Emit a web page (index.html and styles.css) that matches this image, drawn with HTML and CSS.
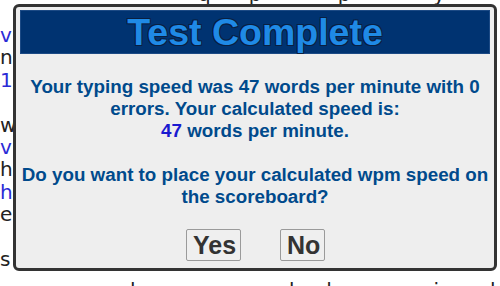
FILE: index.html
```html
<!DOCTYPE html>
<html>
<head>
<meta charset="utf-8">
<link rel="stylesheet" href="styles.css">
</head>
<body>
<div class="page">
  <div class="topline">q&nbsp;&nbsp;&nbsp;&nbsp;&nbsp;&nbsp;p&nbsp;&nbsp;&nbsp;&nbsp;&nbsp;&nbsp;&nbsp;&nbsp;&nbsp;&nbsp;&nbsp;&nbsp;p&nbsp;&nbsp;&nbsp;&nbsp;&nbsp;&nbsp;&nbsp;&nbsp;&nbsp;&nbsp;&nbsp;&nbsp;&nbsp;y&nbsp;&nbsp;&nbsp;&nbsp;&nbsp;&nbsp;&nbsp;&nbsp;&nbsp;&nbsp;p</div>
  <div class="lines">
    <div class="ln blue">v</div>
    <div class="ln">n</div>
    <div class="ln blue">1</div>
    <div class="ln"></div>
    <div class="ln">w</div>
    <div class="ln blue">v</div>
    <div class="ln">h</div>
    <div class="ln blue">h</div>
    <div class="ln">e</div>
    <div class="ln"></div>
    <div class="ln">s</div>
  </div>
  <div class="botline">l&nbsp;&nbsp;&nbsp;&nbsp;&nbsp;&nbsp;&nbsp;&nbsp;&nbsp;&nbsp;&nbsp;&nbsp;&nbsp;&nbsp;&nbsp;&nbsp;&nbsp;&nbsp;&nbsp;&nbsp;&nbsp;&nbsp;&nbsp;d&nbsp;&nbsp;&nbsp;&nbsp;&nbsp;l&nbsp;&nbsp;&nbsp;&nbsp;&nbsp;&nbsp;&nbsp;&nbsp;&nbsp;&nbsp;&nbsp;&nbsp;&nbsp;&nbsp;&nbsp;&nbsp;i&nbsp;&nbsp;&nbsp;&nbsp;&nbsp;&nbsp;&nbsp;&nbsp;l&nbsp;&nbsp;&nbsp;&nbsp;&nbsp;&nbsp;&nbsp;&nbsp;b</div>
</div>

<div class="dialog">
  <div class="header">Test Complete</div>
  <div class="content">
    <p class="msg">Your typing speed was 47 words per minute with 0 errors. Your calculated speed is:<br><span class="num">47</span> words per minute.</p>
    <p class="msg q">Do you want to place your calculated wpm speed on the scoreboard?</p>
    <div class="buttons">
      <button class="btn yes">Yes</button>
      <button class="btn no">No</button>
    </div>
  </div>
</div>
</body>
</html>
```
FILE: styles.css
```css
html, body {
  margin: 0;
  padding: 0;
  background: #ffffff;
}

.page {
  position: relative;
  width: 500px;
  height: 286px;
  overflow: hidden;
  font-family: "DejaVu Sans", sans-serif;
  font-size: 20px;
  color: #222;
}

.topline {
  position: relative;
  top: -16px;
  height: 20px;
  margin-bottom: -16px;
  margin-left: 198px;
  line-height: 20px;
  white-space: nowrap;
}

.lines {
  padding-top: 20px;
}

.ln {
  height: 22.4px;
  line-height: 22px;
}

.blue { color: #2b2bd6; }

.botline {
  position: absolute;
  top: 280px;
  left: 130px;
  white-space: nowrap;
  line-height: 20px;
}

.dialog {
  position: absolute;
  left: 13px;
  top: 4px;
  width: 470px;
  height: 258px;
  border: 3px solid #333;
  border-radius: 6px;
  background: #eeeeee;
  padding: 3px 4px 0 4px;
  font-family: "Liberation Sans", Arial, sans-serif;
  display: flex;
  flex-direction: column;
}

.header {
  height: 44px;
  background: #003371;
  border: 1px solid #1c4a85;
  box-sizing: border-box;
  text-align: center;
  font-weight: bold;
  font-size: 37.5px;
  line-height: 42px;
  color: #1f8ae6;
  text-shadow: -1px -1px 0 #0a1f40, 1px -1px 0 #0a1f40, -1px 1px 0 #0a1f40, 1px 1px 0 #0a1f40;
}

.content {
  flex: 1;
  display: flex;
  flex-direction: column;
  align-items: center;
  padding: 0 1px;
}

.msg {
  margin: 0;
  text-align: center;
  font-weight: bold;
  font-size: 18.8px;
  line-height: 22px;
  color: #004a8c;
}

.msg:first-child {
  margin-top: 22px;
}

.q {
  margin-top: 22px;
}

.num { color: #1a1ad0; }

.buttons {
  display: flex;
  gap: 39px;
  margin-top: 21px;
  padding-left: 1px;
}

.btn {
  font-family: "Liberation Sans", Arial, sans-serif;
  font-weight: bold;
  font-size: 25px;
  color: #333;
  background: #efefef;
  border: 1px solid #9a9a9a;
  border-radius: 2px;
  height: 32px;
  padding: 0 6px;
  line-height: 30px;
}

.yes { width: 55px; }
.no { width: 45px; }
```
